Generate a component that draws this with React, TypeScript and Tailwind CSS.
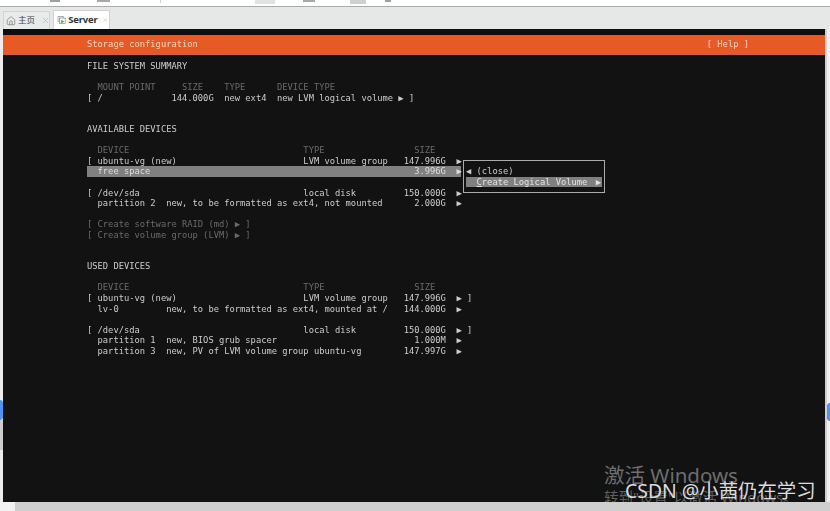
import { Home, X } from "lucide-react";

const ROW = "h-[10.55px] leading-[10.55px] whitespace-pre";

function Row({ text, dim }: { text?: string; dim?: boolean }) {
  return <div className={`${ROW} ${dim ? "text-[#6a6a6a]" : "text-[#cccccc]"}`}>{text ?? " "}</div>;
}

const rows: { text?: string; dim?: boolean; selected?: boolean }[] = [
  { text: "FILE SYSTEM SUMMARY" },
  {},
  { text: "  MOUNT POINT     SIZE    TYPE      DEVICE TYPE", dim: true },
  { text: "[ /             144.000G  new ext4  new LVM logical volume ▶ ]" },
  {},
  {},
  { text: "AVAILABLE DEVICES" },
  {},
  { text: "  DEVICE                                 TYPE                 SIZE", dim: true },
  { text: "[ ubuntu-vg (new)                        LVM volume group   147.996G  ▶" },
  { text: "  free space                                                  3.996G  ▶", selected: true },
  {},
  { text: "[ /dev/sda                               local disk         150.000G  ▶" },
  { text: "  partition 2  new, to be formatted as ext4, not mounted      2.000G  ▶" },
  {},
  { text: "[ Create software RAID (md) ▶ ]", dim: true },
  { text: "[ Create volume group (LVM) ▶ ]", dim: true },
  {},
  {},
  { text: "USED DEVICES" },
  {},
  { text: "  DEVICE                                 TYPE                 SIZE", dim: true },
  { text: "[ ubuntu-vg (new)                        LVM volume group   147.996G  ▶ ]" },
  { text: "  lv-0         new, to be formatted as ext4, mounted at /   144.000G  ▶" },
  {},
  { text: "[ /dev/sda                               local disk         150.000G  ▶ ]" },
  { text: "  partition 1  new, BIOS grub spacer                          1.000M  ▶" },
  { text: "  partition 3  new, PV of LVM volume group ubuntu-vg        147.997G  ▶" },
];

function ServerIcon() {
  return (
    <svg width="14" height="14" viewBox="0 0 14 14" fill="none">
      <rect x="1.5" y="1.5" width="8" height="8" fill="#f4f4f4" stroke="#8a8f8f" />
      <rect x="4" y="4" width="8.5" height="8.5" fill="#ffffff" stroke="#7f8585" />
      <path d="M6.5 6.5 L11 9.5 L6.5 12 Z" fill="#3aa53a" />
    </svg>
  );
}

export default function App() {
  return (
    <div className="w-[830px] h-[511px] overflow-hidden flex flex-col bg-white font-['Noto_Sans','Noto_Sans_CJK_SC',sans-serif]">
      {/* toolbar, cut off by the crop */}
      <div className="h-[7px] border-b border-[#a9abab] bg-white flex items-start text-[0px] shrink-0">
        <div className="ml-[50px] w-[10px] h-[2px] bg-[#a0a0a0]" />
        <div className="ml-[37px] w-[13px] h-[2px] bg-[#a8a8a8]" />
        <div className="ml-[50px] w-[1px] h-[3px] bg-[#d0d0d0]" />
        <div className="ml-[94px] w-[20px] h-[4px] bg-[#e2e2e2]" />
        <div className="ml-[28px] w-[12px] h-[2px] bg-[#a8a8a8]" />
        <div className="ml-[35px] w-[16px] h-[4px] bg-[#d0d0d0]" />
        <div className="ml-[19px] w-[6px] h-[2px] bg-[#a0a0a0]" />
      </div>

      {/* tab band */}
      <div className="h-[22px] shrink-0 bg-[#e6e8e8] flex items-end pl-[3px] gap-[3px]">
        <div className="w-[47px] h-[18px] bg-[#e9eaea] border border-b-0 border-[#d2d4d4] flex items-center pl-[1px] text-[#444] text-[8.5px] whitespace-nowrap">
          <Home size={10} className="text-[#8a8a8a] ml-[1px] mr-[2px] shrink-0" />
          <span>主页</span>
          <X size={9} className="text-[#bbbbbb] ml-[6px] shrink-0" />
        </div>
        <div className="w-[57px] h-[19px] bg-white border border-b-0 border-[#d2d4d4] flex items-center pl-[3px] text-[#333] text-[9.5px] font-bold">
          <ServerIcon />
          <span className="ml-[2px] tracking-[-0.2px]">Server</span>
          <X size={10} className="text-[#bbbbbb] ml-[5px]" />
        </div>
      </div>

      <div className="flex-1 flex min-h-0">
        <div className="w-[3px] shrink-0 flex flex-col bg-[#ececec]">
          <div className="h-[371px]" />
          <div className="h-[20px] bg-[#4d94f5] rounded-r-full" />
          <div className="h-[30px] bg-[#cdcdcd]" />
        </div>

        {/* console */}
        <div className="relative w-[822px] shrink-0 bg-[#121212] overflow-hidden font-['DejaVu_Sans_Mono',monospace] text-[8.77px]">
          <div className="h-[6px] bg-[#0a1012]" />
          <div className="h-[20px] bg-[#e85a25] flex items-center pl-[84px] pr-[76px] justify-between text-[#f4d4c4] whitespace-pre blur-[0.3px]">
            <span>Storage configuration</span>
            <span>[ Help ]</span>
          </div>
          <div className="pl-[84px] pt-[6px] blur-[0.3px]">
            {rows.map((r, i) =>
              r.selected ? (
                <div key={i} className={`${ROW} w-[374px] bg-[#808080] text-[#dcdcdc]`}>{r.text}</div>
              ) : (
                <Row key={i} text={r.text} dim={r.dim} />
              ),
            )}
          </div>

          {/* submenu popup */}
          <div className="absolute left-[460px] top-[131px] w-[142px] h-[33px] border border-[#ababab] bg-[#121212] pl-[2px] pr-[2px] pt-[5px] whitespace-pre text-[#cccccc] blur-[0.3px]">
            <div className={ROW}>◀ (close)</div>
            <div className={`${ROW} bg-[#808080] text-[#e2e2e2] flex justify-between pr-[1px]`}>
              <span>  <span className="underline">C</span>reate Logical Volume</span>
              <span>▶</span>
            </div>
          </div>

          {/* activation text + blog watermark */}
          <div className="absolute left-[601px] top-[434px] text-[#6d6d6d] text-[20.5px] leading-[24px] whitespace-pre font-['Noto_Sans','Noto_Sans_CJK_SC',sans-serif]">
            激活 Windows
          </div>
          <div className="absolute left-[601px] top-[459px] text-[#5f5f5f] text-[14.5px] leading-[18px] whitespace-pre font-['Noto_Sans','Noto_Sans_CJK_SC',sans-serif]">
            转到"设置"以激活 Windows。
          </div>
          <div className="absolute left-[622px] top-[449px] text-[#dcdcdc] text-[19.4px] leading-[26px] whitespace-pre font-['Noto_Sans','Noto_Sans_CJK_SC',sans-serif]">
            CSDN @小茜仍在学习
          </div>
        </div>

        <div className="w-[5px] shrink-0 flex bg-[#f0f0f0]">
          <div className="w-[2px] bg-[#d0d0d0]" />
          <div className="w-[3px] flex flex-col">
            <div className="h-[374px]" />
            <div className="h-[18px] bg-[#4d94f5] rounded-l-full" />
          </div>
        </div>
      </div>

      {/* bottom scroll strip */}
      <div className="h-[9px] shrink-0 flex bg-[#cfcfcf]">
        <div className="w-[15px] bg-[#f2f2f2]" />
      </div>
    </div>
  );
}
